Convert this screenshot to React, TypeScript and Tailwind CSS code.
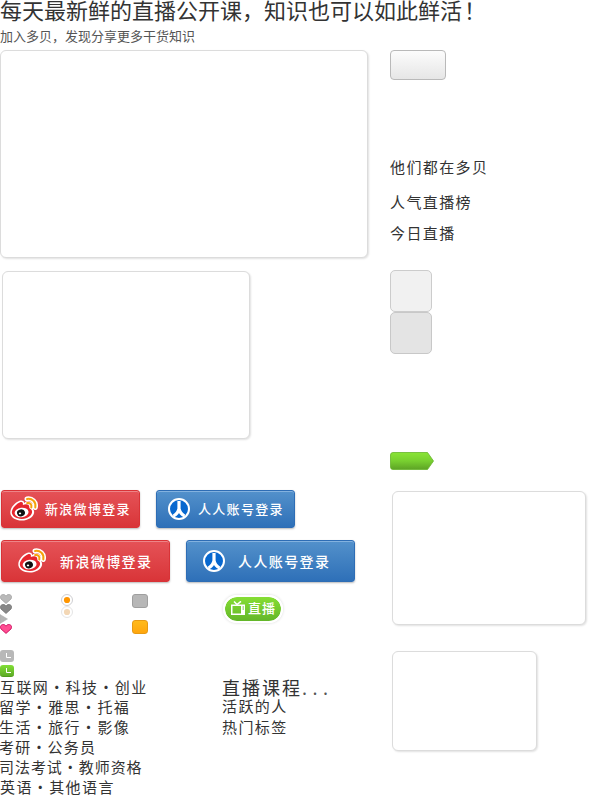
import type { ReactNode } from 'react';

function Panel({ className }: { className: string }) {
  return <div className={`rounded-md border border-[#dcdcdc] bg-white shadow-[1px_1px_2px_rgba(0,0,0,0.12)] ${className}`} />;
}

function WeiboIcon() {
  return (
    <svg width="28" height="26" viewBox="0 0 28 26" className="shrink-0">
      <path d="M17 3C22 2 26.500 6 25.300 11.500" fill="none" stroke="#fff" strokeWidth="5" strokeLinecap="round" />
      <path d="M17 7.500C20 7 22 8.500 21.300 12" fill="none" stroke="#fff" strokeWidth="4" strokeLinecap="round" />
      <path d="M0.300 16C0.500 11.500 5 6.500 9.500 4.800C12 3.900 14.200 4.800 14.300 7C17 6.200 20.600 6.300 21 9.500L21 11.800C23.700 13 24.500 15 24 17.200C23 21.500 17.500 24.500 12 24.500C5.500 24.500 0 21.200 0.300 16Z" fill="#fff" />
      <path d="M1.800 16C2.100 12.500 6.200 7.800 10 6.300C12.500 5.400 13.400 7 12.800 9C15.500 7.800 19.500 7.700 19.300 11.200C19.200 12.300 20 12.500 21.200 13.400C24 16.200 20 22.900 11.800 22.900C6 22.900 1.600 19.700 1.800 16Z" fill="#e6262d" />
      <ellipse cx="11.600" cy="16.500" rx="7" ry="4.700" transform="rotate(-7 11.600 16.500)" fill="#fff" />
      <ellipse cx="11" cy="16.800" rx="4" ry="3.500" transform="rotate(-15 11 16.800)" fill="#111" />
      <ellipse cx="10" cy="17.400" rx="1.200" ry="0.900" fill="#fff" />
      <path d="M17 3C22 2 26.500 6 25.300 11.500M17.200 7.100C20.300 6.700 22 8.500 21.300 11.500" fill="none" stroke="#f5a20b" strokeWidth="2" strokeLinecap="round" />
    </svg>
  );
}

function RenrenIcon() {
  return (
    <svg width="22" height="22" viewBox="0 0 22 22" className="shrink-0">
      <circle cx="11" cy="11" r="10" fill="#0868cf" stroke="#fff" strokeWidth="2" />
      <path d="M11 3V10.500C10.500 14 8 16.500 5.500 18M11 10.500C11.500 14 14 16.500 16.500 18" fill="none" stroke="#fff" strokeWidth="3.200" />
    </svg>
  );
}

function LoginButton({ color, className, children }: { color: 'red' | 'blue'; className: string; children: ReactNode }) {
  const tone = color === 'red'
    ? 'border-[#d93337] from-[#e55257] to-[#d93438] shadow-[inset_0_1px_0_#ed8588,0_1px_2px_rgba(0,0,0,0.28)]'
    : 'border-[#2e6db5] from-[#5391cb] to-[#2e70b8] shadow-[inset_0_1px_0_#83b2df,0_1px_2px_rgba(0,0,0,0.28)]';
  return <button className={`flex items-center rounded-[3px] border bg-linear-to-b font-medium whitespace-nowrap text-white ${tone} ${className}`}>{children}</button>;
}

function Heart({ fill, stroke }: { fill: string; stroke: string }) {
  return (
    <svg width="12" height="10" viewBox="0 0 12 10" className="block">
      <path d="M6 9.400L1 4.900C-0.500 2.800 1 0.500 3.200 0.500C4.600 0.500 5.500 1.300 6 2.200C6.500 1.300 7.400 0.500 8.800 0.500C11 0.500 12.500 2.800 11 4.900Z" fill={fill} stroke={stroke} />
    </svg>
  );
}

function Radio({ faded = false }: { faded?: boolean }) {
  return (
    <svg width="12" height="12" viewBox="0 0 12 12" className="block overflow-visible">
      <circle cx="6" cy="6" r="5.500" fill="#fff" stroke={faded ? '#e5e5e5' : '#cfcfd2'} />
      <circle cx="6" cy="6" r="3.100" fill={faded ? '#f3d7b5' : '#ff9600'} />
    </svg>
  );
}

function Clock({ className }: { className: string }) {
  return (
    <div className={`h-3 w-3.5 rounded-[3px] ${className}`}>
      <svg width="14" height="12" viewBox="0 0 14 12" className="block"><path d="M6.500 3V7.500H11" fill="none" stroke="#fff" /></svg>
    </div>
  );
}

const topics = [
  { text: '互联网・科技・创业', style: 'tracking-[1.4px]' },
  { text: '留学・雅思・托福', style: 'tracking-[1.4px] -ml-px' },
  { text: '生活・旅行・影像', style: 'tracking-[1.4px] -ml-px' },
  { text: '考研・公务员', style: 'tracking-[1.2px] -ml-px' },
  { text: '司法考试・教师资格', style: 'tracking-[0.95px] -ml-px' },
  { text: '英语・其他语言', style: 'tracking-[1.4px]' },
];

export default function App() {
  return (
    <main className="flex h-[795px] w-[600px] overflow-hidden bg-white font-['Noto_Sans_CJK_SC',sans-serif] text-[15px] text-[#333]">
      <section className="w-[390px] shrink-0">
        <h1 className="h-7 text-[22px] leading-[18px] whitespace-nowrap">每天最新鲜的直播公开课，知识也可以如此鲜活<span className="ml-0.5">！</span></h1>
        <p className="h-[22px] text-[13px] leading-[15px] text-[#555]">加入多贝，发现分享更多干货知识</p>
        <Panel className="h-[208px] w-[368px]" />
        <Panel className="mt-[13px] ml-0.5 h-[168px] w-[248px]" />

        <div className="mt-[51px] ml-px flex gap-4">
          <LoginButton color="red" className="h-[38px] w-[139px] pl-2 text-[13px] tracking-[1.3px]">
            <WeiboIcon /><span className="ml-[7px]">新浪微博登录</span>
          </LoginButton>
          <LoginButton color="blue" className="h-[38px] w-[139px] pl-[11px] text-[13px] tracking-[1.3px]">
            <RenrenIcon /><span className="ml-2">人人账号登录</span>
          </LoginButton>
        </div>
        <div className="mt-3 ml-px flex gap-4">
          <LoginButton color="red" className="h-[42px] w-[169px] pl-4 text-[14px] tracking-[1.4px]">
            <WeiboIcon /><span className="ml-3.5">新浪微博登录</span>
          </LoginButton>
          <LoginButton color="blue" className="h-[42px] w-[169px] pl-4 text-[14px] tracking-[1.4px]">
            <RenrenIcon /><span className="ml-[13px]">人人账号登录</span>
          </LoginButton>
        </div>

        <div className="mt-3 flex h-[84px]">
          <div className="w-[61px]">
            <Heart fill="#b9b9b9" stroke="#a9a9a9" />
            <Heart fill="#888" stroke="#7b7b7b" />
            <svg width="8" height="10" viewBox="0 0 8 10" className="block"><path d="M0 0.500L7.500 5L0 9.500Z" fill="#b5b5b5" stroke="#a8a8a8" strokeWidth="0.500" /></svg>
            <Heart fill="#ff4d91" stroke="#cf1764" />
            <Clock className="mt-4 bg-[#b8b8b8]" />
            <Clock className="mt-[3px] border-b border-[#519c1f] bg-linear-to-b from-[#82df36] to-[#5dac25]" />
          </div>
          <div className="w-[71px]"><Radio /><Radio faded /></div>
          <div className="w-[91px]">
            <div className="h-3.5 w-4 rounded-[3px] border border-[#9f9f9f] bg-[#b7b7b7]" />
            <div className="mt-3 h-3.5 w-4 rounded-[3px] border border-[#e79a14] bg-linear-to-b from-[#ffba1b] to-[#ffa60d]" />
          </div>
          <div className="mt-px flex h-7 w-[60px] items-center rounded-full border-2 border-white bg-linear-to-b from-[#86de34] to-[#63b629] bg-clip-padding pl-1.5 text-[13px] font-medium whitespace-nowrap text-white shadow-[0_0_3px_rgba(0,0,0,0.16)]">
            <svg width="14" height="14" viewBox="0 0 14 14" className="-mt-0.5 shrink-0">
              <path d="M3 0.500L6 3.500L10 0.300" fill="none" stroke="#fff" strokeWidth="1.500" />
              <path fillRule="evenodd" d="M0 3.500H14V14H0ZM1.500 5V12.500H10V5Z" fill="#fff" />
              <path d="M11.500 6H13M11.500 8H13" stroke="#68b932" />
            </svg>
            <span className="-mt-0.5 ml-[3px] tracking-[1px]">直播</span>
          </div>
        </div>

        <div className="flex">
          <ul className="w-[222px] whitespace-nowrap">
            {topics.map(({ text, style }) => <li key={text} className={`h-5 leading-[18px] ${style}`}>{text}</li>)}
          </ul>
          <div className="whitespace-nowrap">
            <h2 className="h-[19px] text-[18px] leading-[19px] tracking-[2px]">直播课程<span className="tracking-[5.500px] text-[#555]">...</span></h2>
            <p className="h-5 leading-[17px] tracking-[1.4px]">活跃的人</p>
            <p className="h-5 leading-[19px] tracking-[1.4px]">热门标签</p>
          </div>
        </div>
      </section>

      <aside className="w-[210px]">
        <button className="mt-[50px] block h-[30px] w-14 rounded-[4px] border border-[#b9b9b9] bg-linear-to-b from-[#fcfcfc] to-[#e6e6e6]" />
        <h2 className="mt-[77px] h-[35px] leading-[20px] tracking-[1.4px]">他们都在多贝</h2>
        <h2 className="h-[31px] leading-[20px] tracking-[1.4px]">人气直播榜</h2>
        <h2 className="h-[47px] leading-[20px] tracking-[1.4px]">今日直播</h2>
        <div className="h-[42px] w-[42px] rounded-[5px] border border-[#ccc] bg-[#f1f1f1]" />
        <div className="h-[42px] w-[42px] rounded-[5px] border border-[#c8c8c8] bg-[#e4e4e4]" />
        <svg width="44" height="18" viewBox="0 0 44 18" className="mt-[98px] block">
          <defs><linearGradient id="tag" x2="0" y2="1"><stop stopColor="#89e436" /><stop offset="0.500" stopColor="#78cf30" /><stop offset="1" stopColor="#5da325" /></linearGradient></defs>
          <path d="M3 0.500H37.500L43.500 9L37.500 17.500H3Q0.500 17.500 0.500 15V3Q0.500 0.500 3 0.500Z" fill="url(#tag)" stroke="#66b52b" strokeWidth="0.800" />
        </svg>
        <Panel className="mt-[21px] ml-0.5 h-[134px] w-[194px]" />
        <Panel className="mt-[26px] ml-0.5 h-[100px] w-[145px]" />
      </aside>
    </main>
  );
}
